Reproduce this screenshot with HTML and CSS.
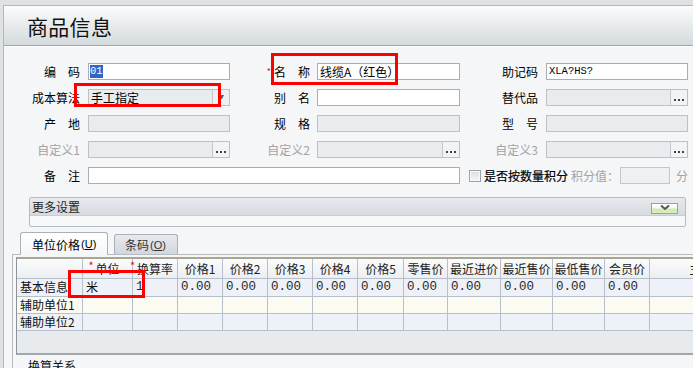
FILE: index.html
```html
<!DOCTYPE html>
<html lang="zh-CN">
<head>
<meta charset="utf-8">
<title>商品信息</title>
<link rel="stylesheet" href="styles.css">
</head>
<body>
<div class="window">
  <div class="titlebar"><h1>商品信息</h1></div>
  <div class="content">
    <div class="form">
      <label class="lbl">编　码</label>
      <div class="field"><span class="sel">01</span></div>
      <label class="lbl l2"><span class="star">*</span>名　称</label>
      <div class="field">线缆A（红色）</div>
      <label class="lbl">助记码</label>
      <div class="field mono">XLA?HS?</div>

      <label class="lbl">成本算法</label>
      <div class="field dis combo"><span class="val">手工指定</span><span class="drop"><svg width="5" height="4" viewBox="0 0 5 4"><polygon points="0,0 5,0 3,4 2,4" fill="#5a5f66"/></svg></span></div>
      <label class="lbl l2">别　名</label>
      <div class="field"></div>
      <label class="lbl">替代品</label>
      <div class="field dis combo"><span class="val"></span><span class="dots"><svg width="10" height="2" viewBox="0 0 10 2"><rect x="0" width="2" height="2" fill="#444"/><rect x="4" width="2" height="2" fill="#444"/><rect x="8" width="2" height="2" fill="#444"/></svg></span></div>

      <label class="lbl">产　地</label>
      <div class="field dis"></div>
      <label class="lbl l2">规　格</label>
      <div class="field dis"></div>
      <label class="lbl">型　号</label>
      <div class="field dis"></div>

      <label class="lbl muted">自定义1</label>
      <div class="field dis combo"><span class="val"></span><span class="dots"><svg width="10" height="2" viewBox="0 0 10 2"><rect x="0" width="2" height="2" fill="#444"/><rect x="4" width="2" height="2" fill="#444"/><rect x="8" width="2" height="2" fill="#444"/></svg></span></div>
      <label class="lbl l2 muted">自定义2</label>
      <div class="field dis combo"><span class="val"></span><span class="dots"><svg width="10" height="2" viewBox="0 0 10 2"><rect x="0" width="2" height="2" fill="#444"/><rect x="4" width="2" height="2" fill="#444"/><rect x="8" width="2" height="2" fill="#444"/></svg></span></div>
      <label class="lbl muted">自定义3</label>
      <div class="field dis combo"><span class="val"></span><span class="dots"><svg width="10" height="2" viewBox="0 0 10 2"><rect x="0" width="2" height="2" fill="#444"/><rect x="4" width="2" height="2" fill="#444"/><rect x="8" width="2" height="2" fill="#444"/></svg></span></div>

      <label class="lbl">备　注</label>
      <div class="field span3"></div>
      <div class="points">
        <span class="check"></span>
        <span class="pt-label">是否按数量积分</span>
        <span class="muted">积分值：</span>
        <span class="field dis small"></span>
        <span class="muted unit">分</span>
      </div>
    </div>

    <div class="more">
      <div class="more-head">
        <span>更多设置</span>
        <span class="expand"><svg width="10" height="5" viewBox="0 0 10 5"><polyline points="1,0.5 5,4 9,0.5" fill="none" stroke="#555" stroke-width="2"/></svg></span>
      </div>
      <div class="more-body"></div>
    </div>

    <div class="tabs">
      <div class="tab active">单位价格<span class="key">(<u>U</u>)</span></div>
      <div class="tab">条码<span class="key">(<u>O</u>)</span></div>
    </div>
    <div class="tabpanel">
      <div class="gridwrap">
        <div class="grid" role="table">
          <div class="th"></div>
          <div class="th"><span class="req">*</span>单位</div>
          <div class="th"><span class="req">*</span>换算率</div>
          <div class="th">价格1</div>
          <div class="th">价格2</div>
          <div class="th">价格3</div>
          <div class="th">价格4</div>
          <div class="th">价格5</div>
          <div class="th">零售价</div>
          <div class="th">最近进价</div>
          <div class="th">最近售价</div>
          <div class="th">最低售价</div>
          <div class="th">会员价</div>
          <div class="th">主单位</div>

          <div class="td r1">基本信息</div>
          <div class="td r1">米</div>
          <div class="td r1 num">1</div>
          <div class="td r1 num">0.00</div>
          <div class="td r1 num">0.00</div>
          <div class="td r1 num">0.00</div>
          <div class="td r1 num">0.00</div>
          <div class="td r1 num">0.00</div>
          <div class="td r1 num">0.00</div>
          <div class="td r1 num">0.00</div>
          <div class="td r1 num">0.00</div>
          <div class="td r1 num">0.00</div>
          <div class="td r1 num">0.00</div>
          <div class="td r1"></div>

          <div class="td r2">辅助单位1</div>
          <div class="td r2"></div><div class="td r2"></div><div class="td r2"></div><div class="td r2"></div><div class="td r2"></div><div class="td r2"></div><div class="td r2"></div><div class="td r2"></div><div class="td r2"></div><div class="td r2"></div><div class="td r2"></div><div class="td r2"></div><div class="td r2"></div>

          <div class="td r1">辅助单位2</div>
          <div class="td r1"></div><div class="td r1"></div><div class="td r1"></div><div class="td r1"></div><div class="td r1"></div><div class="td r1"></div><div class="td r1"></div><div class="td r1"></div><div class="td r1"></div><div class="td r1"></div><div class="td r1"></div><div class="td r1"></div><div class="td r1"></div>
        </div>
      </div>
      <div class="relation">换算关系</div>
    </div>
  </div>
</div>

<div class="mark mark-name"></div>
<div class="mark mark-cost"></div>
<div class="mark mark-unit"></div>
</body>
</html>
```

FILE: styles.css
```css
* {
  box-sizing: border-box;
  margin: 0;
  padding: 0;
}

html, body {
  width: 693px;
  height: 368px;
  overflow: hidden;
}

body {
  background: #dfe1e5;
  font-family: "Noto Sans CJK SC", "Noto Sans", sans-serif;
  font-size: 12px;
  color: #000;
  padding: 5px 0 0 3px;
}

.window {
  height: 363px;
  width: 700px;
  border-top: 1px solid #b3b7bc;
  border-left: 1px solid #b3b7bc;
  background: #f5f6f8;
}

.titlebar {
  height: 40px;
  padding: 2px 0 0 23px;
  display: flex;
  align-items: center;
  background: linear-gradient(#fbfcfc, #d4dadd);
  border-bottom: 1px solid #9ea7ae;
  box-shadow: 0 1px 0 #ffffff;
}

.titlebar h1 {
  font-size: 21px;
  font-weight: normal;
  line-height: 1;
  color: #111;
  letter-spacing: 0.3px;
}

.content {
  padding-top: 17px;
}

/* form */
.form {
  display: grid;
  grid-template-columns: 84px 142px 87px 143px 86px 142px;
  grid-auto-rows: 17px;
  row-gap: 9px;
}

.lbl {
  display: flex;
  align-items: center;
  justify-content: flex-end;
  padding-right: 8px;
  white-space: nowrap;
  line-height: 17px;
}

.lbl.l2 {
  padding-right: 7px;
}

.muted {
  color: #a3a3a3;
}

.star {
  color: #e01010;
  font-size: 9px;
  line-height: 1;
  margin-right: 3px;
  align-self: center;
}

.field {
  height: 17px;
  display: flex;
  align-items: center;
  padding-left: 2px;
  background: #fff;
  border: 1px solid #a9aeb4;
  white-space: nowrap;
  overflow: hidden;
  line-height: 15px;
}

.field.dis {
  background: #e9ecef;
  border-color: #bcc1c7;
}

.field.mono {
  font-family: "Liberation Mono", monospace;
  font-size: 10.5px;
}

.sel {
  background: #3167c4;
  color: #fff;
  font-family: "Liberation Mono", monospace;
  font-size: 10.5px;
  line-height: 13px;
  margin-left: -1px;
}

.combo {
  padding-left: 0;
}

.combo .val {
  flex: 1;
  padding-left: 2px;
}

.combo .drop,
.combo .dots {
  width: 17px;
  height: 15px;
  border-left: 1px solid #c3c8ce;
  display: flex;
  justify-content: center;
  background: #eef0f3;
}

.combo .drop {
  align-items: center;
  padding-bottom: 2px;
}

.combo .dots {
  align-items: flex-end;
  padding-bottom: 4px;
  background: #f1f3f5;
}

.span3 {
  grid-column: 2 / 5;
}

.points {
  grid-column: 5 / 7;
  display: flex;
  align-items: center;
  padding-left: 9px;
  white-space: nowrap;
}

.check {
  width: 12px;
  height: 12px;
  border: 1px solid #9da2a8;
  background: linear-gradient(#dcdfe2, #f5f6f7);
  box-shadow: inset 0 0 0 1px #f8f8f8;
  margin-right: 3px;
}

.pt-label {
  color: #000;
  margin-right: 3px;
  -webkit-text-stroke: 0.2px #000;
}

.field.small {
  width: 50px;
  margin-left: 1px;
  background: #eff0f1;
  border-color: #c4c6c8;
}

.unit {
  margin-left: 6px;
}

/* more settings */
.more {
  margin: 13px 0 0 25px;
  width: 657px;
  border: 1px solid #b5bbc2;
  border-radius: 2px;
  background: #f7f8fa;
}

.more-head {
  height: 18px;
  padding: 0 7px 0 2px;
  display: flex;
  align-items: center;
  justify-content: space-between;
  background: linear-gradient(#e6e9ed, #d7dbe0);
  border-bottom: 1px solid #c8cdd3;
  color: #222;
  line-height: 17px;
}

.expand {
  width: 27px;
  height: 11px;
  margin-top: 3px;
  border: 1px solid #80c342;
  background: linear-gradient(#ffffff 0, #f6fbf0 45%, #cfe9ae 55%, #d9efbf 100%);
  display: flex;
  align-items: flex-start;
  justify-content: center;
  padding-top: 1px;
}

.more-body {
  height: 10px;
}

/* tabs */
.tabs {
  display: flex;
  align-items: flex-end;
  margin-top: 5px;
  padding-left: 16px;
  height: 22px;
  position: relative;
  z-index: 1;
}

.tab {
  height: 20px;
  width: 64px;
  margin-left: 6px;
  padding-left: 10px;
  display: flex;
  align-items: center;
  border: 1px solid #a9b0b8;
  border-bottom: none;
  border-radius: 3px 3px 0 0;
  background: linear-gradient(#e6e9ed, #d2d7dd);
  color: #333;
  white-space: nowrap;
}

.tab.active {
  height: 23px;
  width: 88px;
  margin-left: 0;
  margin-bottom: -1px;
  padding-left: 11px;
  background: linear-gradient(#ffffff, #f5f6f8);
  color: #000;
}

.key {
  font-family: "Liberation Sans", sans-serif;
  font-size: 11px;
  margin-left: 1px;
}

.tabpanel {
  margin-left: 8px;
  border-top: 1px solid #b6bcc3;
  border-left: 1px solid #b6bcc3;
  padding: 2px 0 0 3px;
  height: 120px;
}

.gridwrap {
  height: 98px;
  border-top: 2px solid #a9a58f;
  border-left: 1px solid #8d939a;
  border-bottom: 2px solid #a2a7ad;
  background: #e8ebee;
  overflow: hidden;
}

.grid {
  display: grid;
  grid-template-columns: 66px 50px 45px 45px 45px 45px 45px 46px 44px 53px 52px 52px 45px 116px;
  grid-template-rows: 20px 18px 17px 17px;
  width: max-content;
}

.th,
.td {
  border-right: 1px solid #b7c0ca;
  border-bottom: 1px solid #b7c0ca;
  white-space: nowrap;
  overflow: visible;
}

.th {
  text-align: center;
  line-height: 19px;
  color: #222;
  background: linear-gradient(#fafbfc, #eceff2);
}

.req {
  position: absolute;
  color: #e01010;
  font-size: 11px;
  line-height: 1;
  margin-left: -7px;
  margin-top: 1px;
}

.td {
  padding-left: 3px;
  line-height: 16px;
  color: #111;
}

.td.r1 {
  background: #eef2f8;
}

.td.r2 {
  background: #fbfbf1;
}

.td.num {
  font-family: "Liberation Mono", monospace;
  font-size: 12.5px;
  color: #2a2a2a;
}

.relation {
  margin: 3px 0 0 12px;
  line-height: 16px;
  color: #111;
}

/* red annotation boxes laid over the screenshot */
.mark {
  position: absolute;
  border: 3px solid #ff0000;
  pointer-events: none;
}

.mark-name {
  left: 271px;
  top: 53px;
  width: 127px;
  height: 32px;
}

.mark-cost {
  left: 74px;
  top: 83px;
  width: 147px;
  height: 24px;
}

.mark-unit {
  left: 68px;
  top: 270px;
  width: 77px;
  height: 28px;
}
```
